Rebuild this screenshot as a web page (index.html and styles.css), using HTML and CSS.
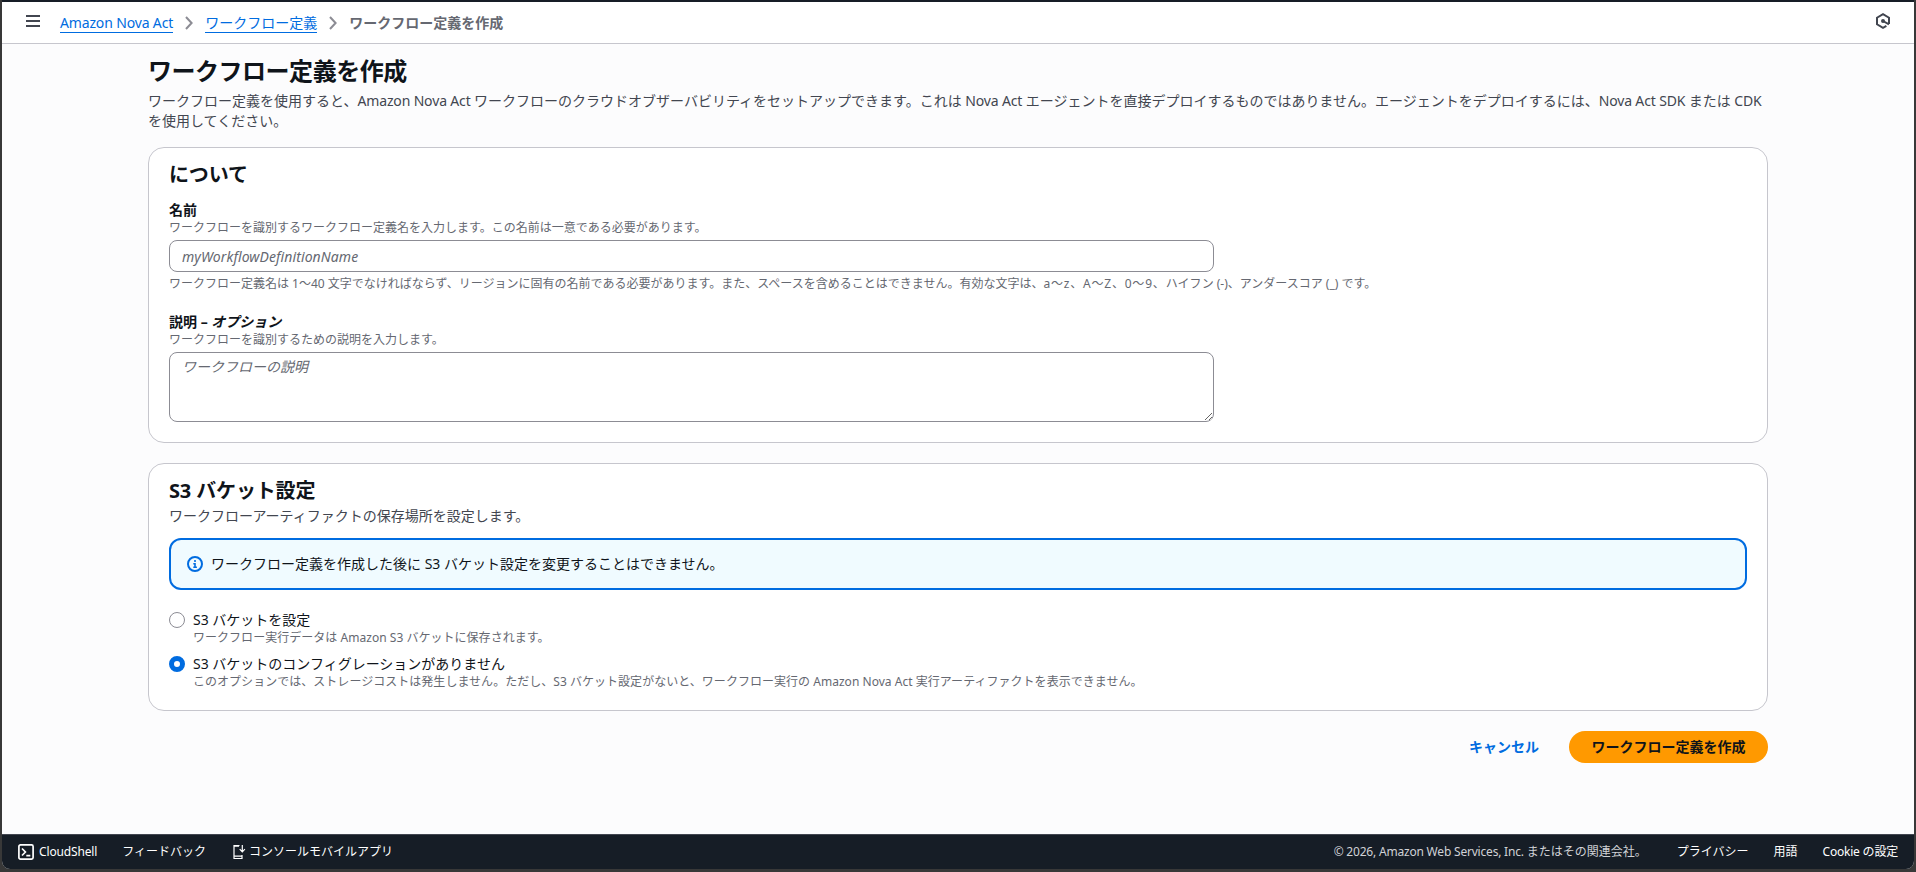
FILE: index.html
```html
<!DOCTYPE html>
<html lang="ja">
<head>
<meta charset="utf-8">
<title>ワークフロー定義を作成</title>
<link rel="stylesheet" href="styles.css">
</head>
<body>
<div class="window">
  <header class="topbar">
    <button class="icon-button menu" aria-label="メニュー">
      <svg width="14" height="12" viewBox="0 0 14 12" stroke="#424650" stroke-width="2"><path d="M0 1h14M0 6h14M0 11h14"/></svg>
    </button>
    <nav class="breadcrumbs">
      <a href="#" class="latin">Amazon Nova Act</a>
      <svg class="chevron" width="8" height="14" viewBox="0 0 8 14" fill="none" stroke="#8c8c94" stroke-width="2"><path d="M1 1l5.6 6L1 13"/></svg>
      <a href="#">ワークフロー定義</a>
      <svg class="chevron" width="8" height="14" viewBox="0 0 8 14" fill="none" stroke="#8c8c94" stroke-width="2"><path d="M1 1l5.6 6L1 13"/></svg>
      <span class="current">ワークフロー定義を作成</span>
    </nav>
    <button class="icon-button assist" aria-label="アシスタント">
      <svg width="16" height="16" viewBox="0 0 16 16" fill="none" stroke="#424650" stroke-width="2"><path d="M14 11V4.7L8 1.2 2 4.7v6.6l6 3.5 3.4-1.9"/><path d="M8 8l6 3.4"/><circle cx="8" cy="8" r="1" fill="#424650"/></svg>
    </button>
  </header>

  <main class="content">
    <h1 class="page-title">ワークフロー定義を作成</h1>
    <p class="page-description"><span class="line">ワークフロー定義を使用すると、<span class="latin">Amazon Nova Act </span>ワークフローのクラウドオブザーバビリティをセットアップできます。これは<span class="latin"> Nova Act </span>エージェントを直接デプロイするものではありません。エージェントをデプロイするには、<span class="latin">Nova Act SDK </span>または<span class="latin"> CDK</span></span><span class="line">を使用してください。</span></p>

    <section class="card about">
      <h2 class="card-title">について</h2>
      <div class="field">
        <label class="label" for="name">名前</label>
        <p class="hint">ワークフローを識別するワークフロー定義名を入力します。この名前は一意である必要があります。</p>
        <input class="control" id="name" type="text" placeholder="myWorkflowDefinitionName">
        <p class="hint constraint">ワークフロー定義名は 1～40 文字でなければならず、リージョンに固有の名前である必要があります。また、スペースを含めることはできません。有効な文字は、<span class="ranges">a～z、A～Z、0～9、</span>ハイフン (-)、アンダースコア (_) です。</p>
      </div>
      <div class="field">
        <label class="label" for="description">説明 – <i>オプション</i></label>
        <p class="hint">ワークフローを識別するための説明を入力します。</p>
        <textarea class="control area" id="description" placeholder="ワークフローの説明"></textarea>
      </div>
    </section>

    <section class="card bucket">
      <h2 class="card-title">S3 バケット設定</h2>
      <p class="card-description">ワークフローアーティファクトの保存場所を設定します。</p>
      <div class="alert">
        <svg width="16" height="16" viewBox="0 0 16 16" fill="none" stroke="#006ce0" stroke-width="2"><circle cx="8" cy="8" r="7"/><path d="M8 4v2M6.3 7.8H8V11M6.3 11.2h3.6" stroke-width="1.6"/></svg>
        <span class="alert-text">ワークフロー定義を作成した後に S3 バケット設定を変更することはできません。</span>
      </div>
      <label class="option">
        <input class="radio" type="radio" name="bucket">
        <span><span class="option-label">S3 バケットを設定</span><span class="hint option-hint">ワークフロー実行データは Amazon S3 バケットに保存されます。</span></span>
      </label>
      <label class="option">
        <input class="radio" type="radio" name="bucket" checked>
        <span><span class="option-label">S3 バケットのコンフィグレーションがありません</span><span class="hint option-hint">このオプションでは、ストレージコストは発生しません。ただし、S3 バケット設定がないと、ワークフロー実行の Amazon Nova Act 実行アーティファクトを表示できません。</span></span>
      </label>
    </section>

    <div class="actions">
      <button class="button link">キャンセル</button>
      <button class="button primary">ワークフロー定義を作成</button>
    </div>
  </main>

  <footer class="footer">
    <a class="shell"><svg width="16" height="16" viewBox="0 0 16 16" fill="none" stroke="#fff" stroke-width="1.7"><rect x=".9" y=".9" width="14.2" height="14.2" rx="1.6"/><path d="M4 4.5L7.4 8 4 11.5M8.3 11.7h4"/></svg><span class="latin">CloudShell</span></a>
    <a class="feedback">フィードバック</a>
    <a class="mobile"><svg width="13" height="16" viewBox="0 0 13 16" fill="none" stroke="#fff" stroke-width="1.2"><path d="M6.5 1.5H1v13h8V11M1 2.2h5M1 12.2h8M9.3 1v6.5M6.7 5.2l2.6 2.6 2.6-2.6"/></svg><span>コンソールモバイルアプリ</span></a>
    <span class="copyright"><span class="owner">© 2026, Amazon Web Services, Inc. </span>またはその関連会社。</span>
    <a class="privacy">プライバシー</a>
    <a class="terms">用語</a>
    <a class="cookies">Cookie の設定</a>
  </footer>
</div>
</body>
</html>
```
FILE: styles.css
```css
* { box-sizing: border-box; }
body {
  margin: 0;
  background: #383838;
  color: #0f141a;
  font: 14px/20px "Noto Sans", "Noto Sans CJK JP", sans-serif;
}
h1, h2, p { margin: 0; }
button, input, textarea { font: inherit; }
.window {
  display: flex;
  flex-direction: column;
  width: 1912px;
  height: 869px;
  margin: 0 2px 3px;
  border-top: 2px solid #161d26;
  border-radius: 0 0 8px 8px;
  background: #fcfcfd;
  overflow: hidden;
}
.latin { letter-spacing: -0.15px; }
.topbar {
  display: flex;
  align-items: center;
  height: 42px;
  flex: none;
  padding: 0 23px 0 24px;
  background: #fff;
  border-bottom: 1px solid #c6c6cd;
}
.icon-button { display: flex; padding: 0; border: 0; background: none; }
.menu { margin-right: 20px; margin-top: -3px; }
.assist { margin-left: auto; margin-top: -3px; }
.breadcrumbs { display: flex; align-items: center; white-space: nowrap; }
.breadcrumbs a {
  color: #006ce0;
  text-decoration: none;
  border-bottom: 1px solid #006ce0;
  line-height: 19px;
}
.chevron { margin: 0 12px; }
.current { color: #656871; font-weight: 700; }
.content { width: 1620px; margin: 0 auto; padding-top: 12px; flex: 1; }
.page-title { font-size: 24px; line-height: 30px; letter-spacing: -0.02em; }
.page-description { margin-top: 5px; color: #424650; }
.line { display: block; white-space: nowrap; }
.card {
  border: 1px solid #c6c6cd;
  border-radius: 16px;
  background: #fff;
  padding: 15px 20px 20px;
}
.about { height: 296px; margin-top: 16px; }
.bucket { height: 248px; margin-top: 20px; }
.card-title { font-size: 20px; line-height: 24px; letter-spacing: -0.15px; }
.card-description { margin-top: 3px; color: #424650; }
.field { margin-top: 20px; }
.about .card-title + .field { margin-top: 13px; }
.label { display: block; font-weight: 700; }
.hint { display: block; font-size: 12px; line-height: 16px; color: #656871; white-space: nowrap; }
.option-hint { letter-spacing: 0.03px; }
.ranges { letter-spacing: 0.8px; }
.constraint { margin-top: 4px; }
.control {
  display: block;
  width: 1045px;
  height: 32px;
  margin-top: 4px;
  padding: 4px 12px;
  border: 1px solid #8c8c94;
  border-radius: 8px;
  background: #fff;
  outline: 0;
}
.control::placeholder { color: #656871; font-style: italic; }
input.control { letter-spacing: 0.09px; }
.area { height: 70px; }
.alert {
  display: flex;
  align-items: center;
  gap: 8px;
  height: 52px;
  margin: 12px 0 20px;
  padding: 0 16px;
  border: 2px solid #006ce0;
  border-radius: 12px;
  background: #f0fbff;
}
.option { display: flex; gap: 8px; margin-top: 8px; }
.option-label { display: block; }
.radio {
  appearance: none;
  flex: none;
  width: 16px;
  height: 16px;
  margin: 2px 0;
  border: 1px solid #8c8c94;
  border-radius: 50%;
  background: #fff;
}
.radio:checked { border: 5px solid #006ce0; }
.actions { display: flex; justify-content: flex-end; gap: 8px; margin-top: 20px; }
.button {
  height: 32px;
  padding: 0 22px;
  border: 0;
  border-radius: 16px;
  background: none;
  font-weight: 700;
  white-space: nowrap;
}
.link { color: #006ce0; }
.primary { width: 199px; background: #ff9900; color: #0f141a; }
.footer {
  display: flex;
  align-items: center;
  flex: none;
  height: 35px;
  padding: 0 16px;
  border-top: 1px solid #424650;
  background: #161d26;
  color: #fff;
  font-size: 12px;
  white-space: nowrap;
}
.footer a { display: flex; align-items: center; }
.shell { gap: 5px; margin-right: 25px; }
.feedback { margin-right: 27px; }
.mobile { gap: 3px; }
.copyright { margin-left: auto; margin-right: 30px; color: #d0d2d6; }
.owner { letter-spacing: -0.2px; }
.cookies { letter-spacing: -0.2px; }
.privacy, .terms { margin-right: 25px; }
```
